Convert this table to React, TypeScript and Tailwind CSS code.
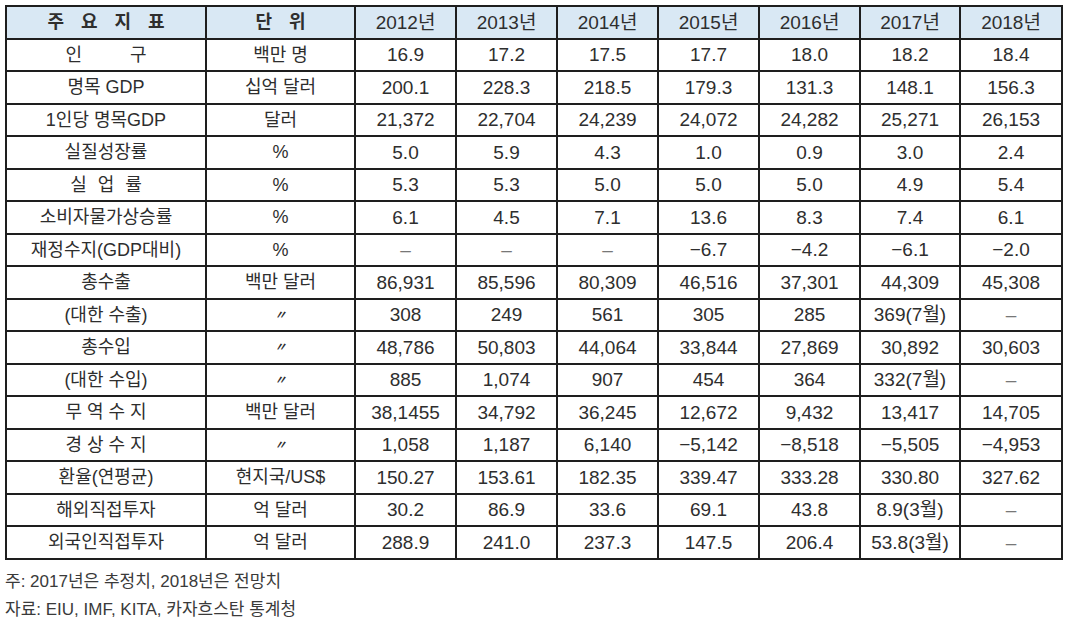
const FONT = "font-['Liberation_Sans','Noto_Sans_CJK_KR',sans-serif]"

const years = ['2012년', '2013년', '2014년', '2015년', '2016년', '2017년', '2018년']

const D = '〃'

type Row = { label: React.ReactNode; unit: string; values: string[] }

const Spaced = ({ chars, gap }: { chars: string[]; gap: string }) => (
  <span className={`inline-flex justify-center ${gap}`}>
    {chars.map((c, i) => (
      <span key={i}>{c}</span>
    ))}
  </span>
)

const rows: Row[] = [
  { label: <Spaced chars={['인', '구']} gap="gap-[48px]" />, unit: '백만 명', values: ['16.9', '17.2', '17.5', '17.7', '18.0', '18.2', '18.4'] },
  { label: '명목 GDP', unit: '십억 달러', values: ['200.1', '228.3', '218.5', '179.3', '131.3', '148.1', '156.3'] },
  { label: '1인당 명목GDP', unit: '달러', values: ['21,372', '22,704', '24,239', '24,072', '24,282', '25,271', '26,153'] },
  { label: '실질성장률', unit: '%', values: ['5.0', '5.9', '4.3', '1.0', '0.9', '3.0', '2.4'] },
  { label: <Spaced chars={['실', '업', '률']} gap="gap-[11px]" />, unit: '%', values: ['5.3', '5.3', '5.0', '5.0', '5.0', '4.9', '5.4'] },
  { label: '소비자물가상승률', unit: '%', values: ['6.1', '4.5', '7.1', '13.6', '8.3', '7.4', '6.1'] },
  { label: '재정수지(GDP대비)', unit: '%', values: ['–', '–', '–', '−6.7', '−4.2', '−6.1', '−2.0'] },
  { label: '총수출', unit: '백만 달러', values: ['86,931', '85,596', '80,309', '46,516', '37,301', '44,309', '45,308'] },
  { label: '(대한 수출)', unit: D, values: ['308', '249', '561', '305', '285', '369(7월)', '–'] },
  { label: '총수입', unit: D, values: ['48,786', '50,803', '44,064', '33,844', '27,869', '30,892', '30,603'] },
  { label: '(대한 수입)', unit: D, values: ['885', '1,074', '907', '454', '364', '332(7월)', '–'] },
  { label: <Spaced chars={['무', '역', '수', '지']} gap="gap-[5px]" />, unit: '백만 달러', values: ['38,1455', '34,792', '36,245', '12,672', '9,432', '13,417', '14,705'] },
  { label: <Spaced chars={['경', '상', '수', '지']} gap="gap-[5px]" />, unit: D, values: ['1,058', '1,187', '6,140', '−5,142', '−8,518', '−5,505', '−4,953'] },
  { label: '환율(연평균)', unit: '현지국/US$', values: ['150.27', '153.61', '182.35', '339.47', '333.28', '330.80', '327.62'] },
  { label: '해외직접투자', unit: '억 달러', values: ['30.2', '86.9', '33.6', '69.1', '43.8', '8.9(3월)', '–'] },
  { label: '외국인직접투자', unit: '억 달러', values: ['288.9', '241.0', '237.3', '147.5', '206.4', '53.8(3월)', '–'] },
]

const cell = 'border-2 border-[#1e1e1e] text-center align-middle p-0 whitespace-nowrap'

export default function App() {
  return (
    <div className={`w-[1066px] h-[644px] bg-white text-[#2e2e2e] pl-[5px] pt-[5px] ${FONT}`}>
      <table className="table-fixed border-collapse w-[1056px] text-[19px] leading-none">
        <colgroup>
          <col className="w-[200px]" />
          <col className="w-[149px]" />
          <col className="w-[101px]" />
          <col className="w-[101px]" />
          <col className="w-[101px]" />
          <col className="w-[101px]" />
          <col className="w-[101px]" />
          <col className="w-[100px]" />
          <col className="w-[102px]" />
        </colgroup>
        <thead>
          <tr className="h-[32.5px] bg-[#d9e8f4]">
            <th className={`${cell} font-bold text-[18px]`}>
              <Spaced chars={['주', '요', '지', '표']} gap="gap-[17px]" />
            </th>
            <th className={`${cell} font-bold text-[18px]`}>
              <Spaced chars={['단', '위']} gap="gap-[17px]" />
            </th>
            {years.map((y) => (
              <th key={y} className={`${cell} font-normal`}>
                {y}
              </th>
            ))}
          </tr>
        </thead>
        <tbody>
          {rows.map((r, i) => (
            <tr key={i} className="h-[32.5px]">
              <td className={`${cell} text-[18px]`}>{r.label}</td>
              <td className={`${cell} ${r.unit === D ? 'text-[12px] font-bold italic' : 'text-[18px]'}`}>{r.unit}</td>
              {r.values.map((v, j) => (
                <td key={j} className={`${cell} ${v === '–' ? 'text-[#777]' : ''}`}>
                  {v}
                </td>
              ))}
            </tr>
          ))}
        </tbody>
      </table>
      <div className="mt-[8px] text-[17px] leading-[28px] text-[#3a3a3a]">
        <p>주: 2017년은 추정치, 2018년은 전망치</p>
        <p>자료: EIU, IMF, KITA, 카자흐스탄 통계청</p>
      </div>
    </div>
  )
}
